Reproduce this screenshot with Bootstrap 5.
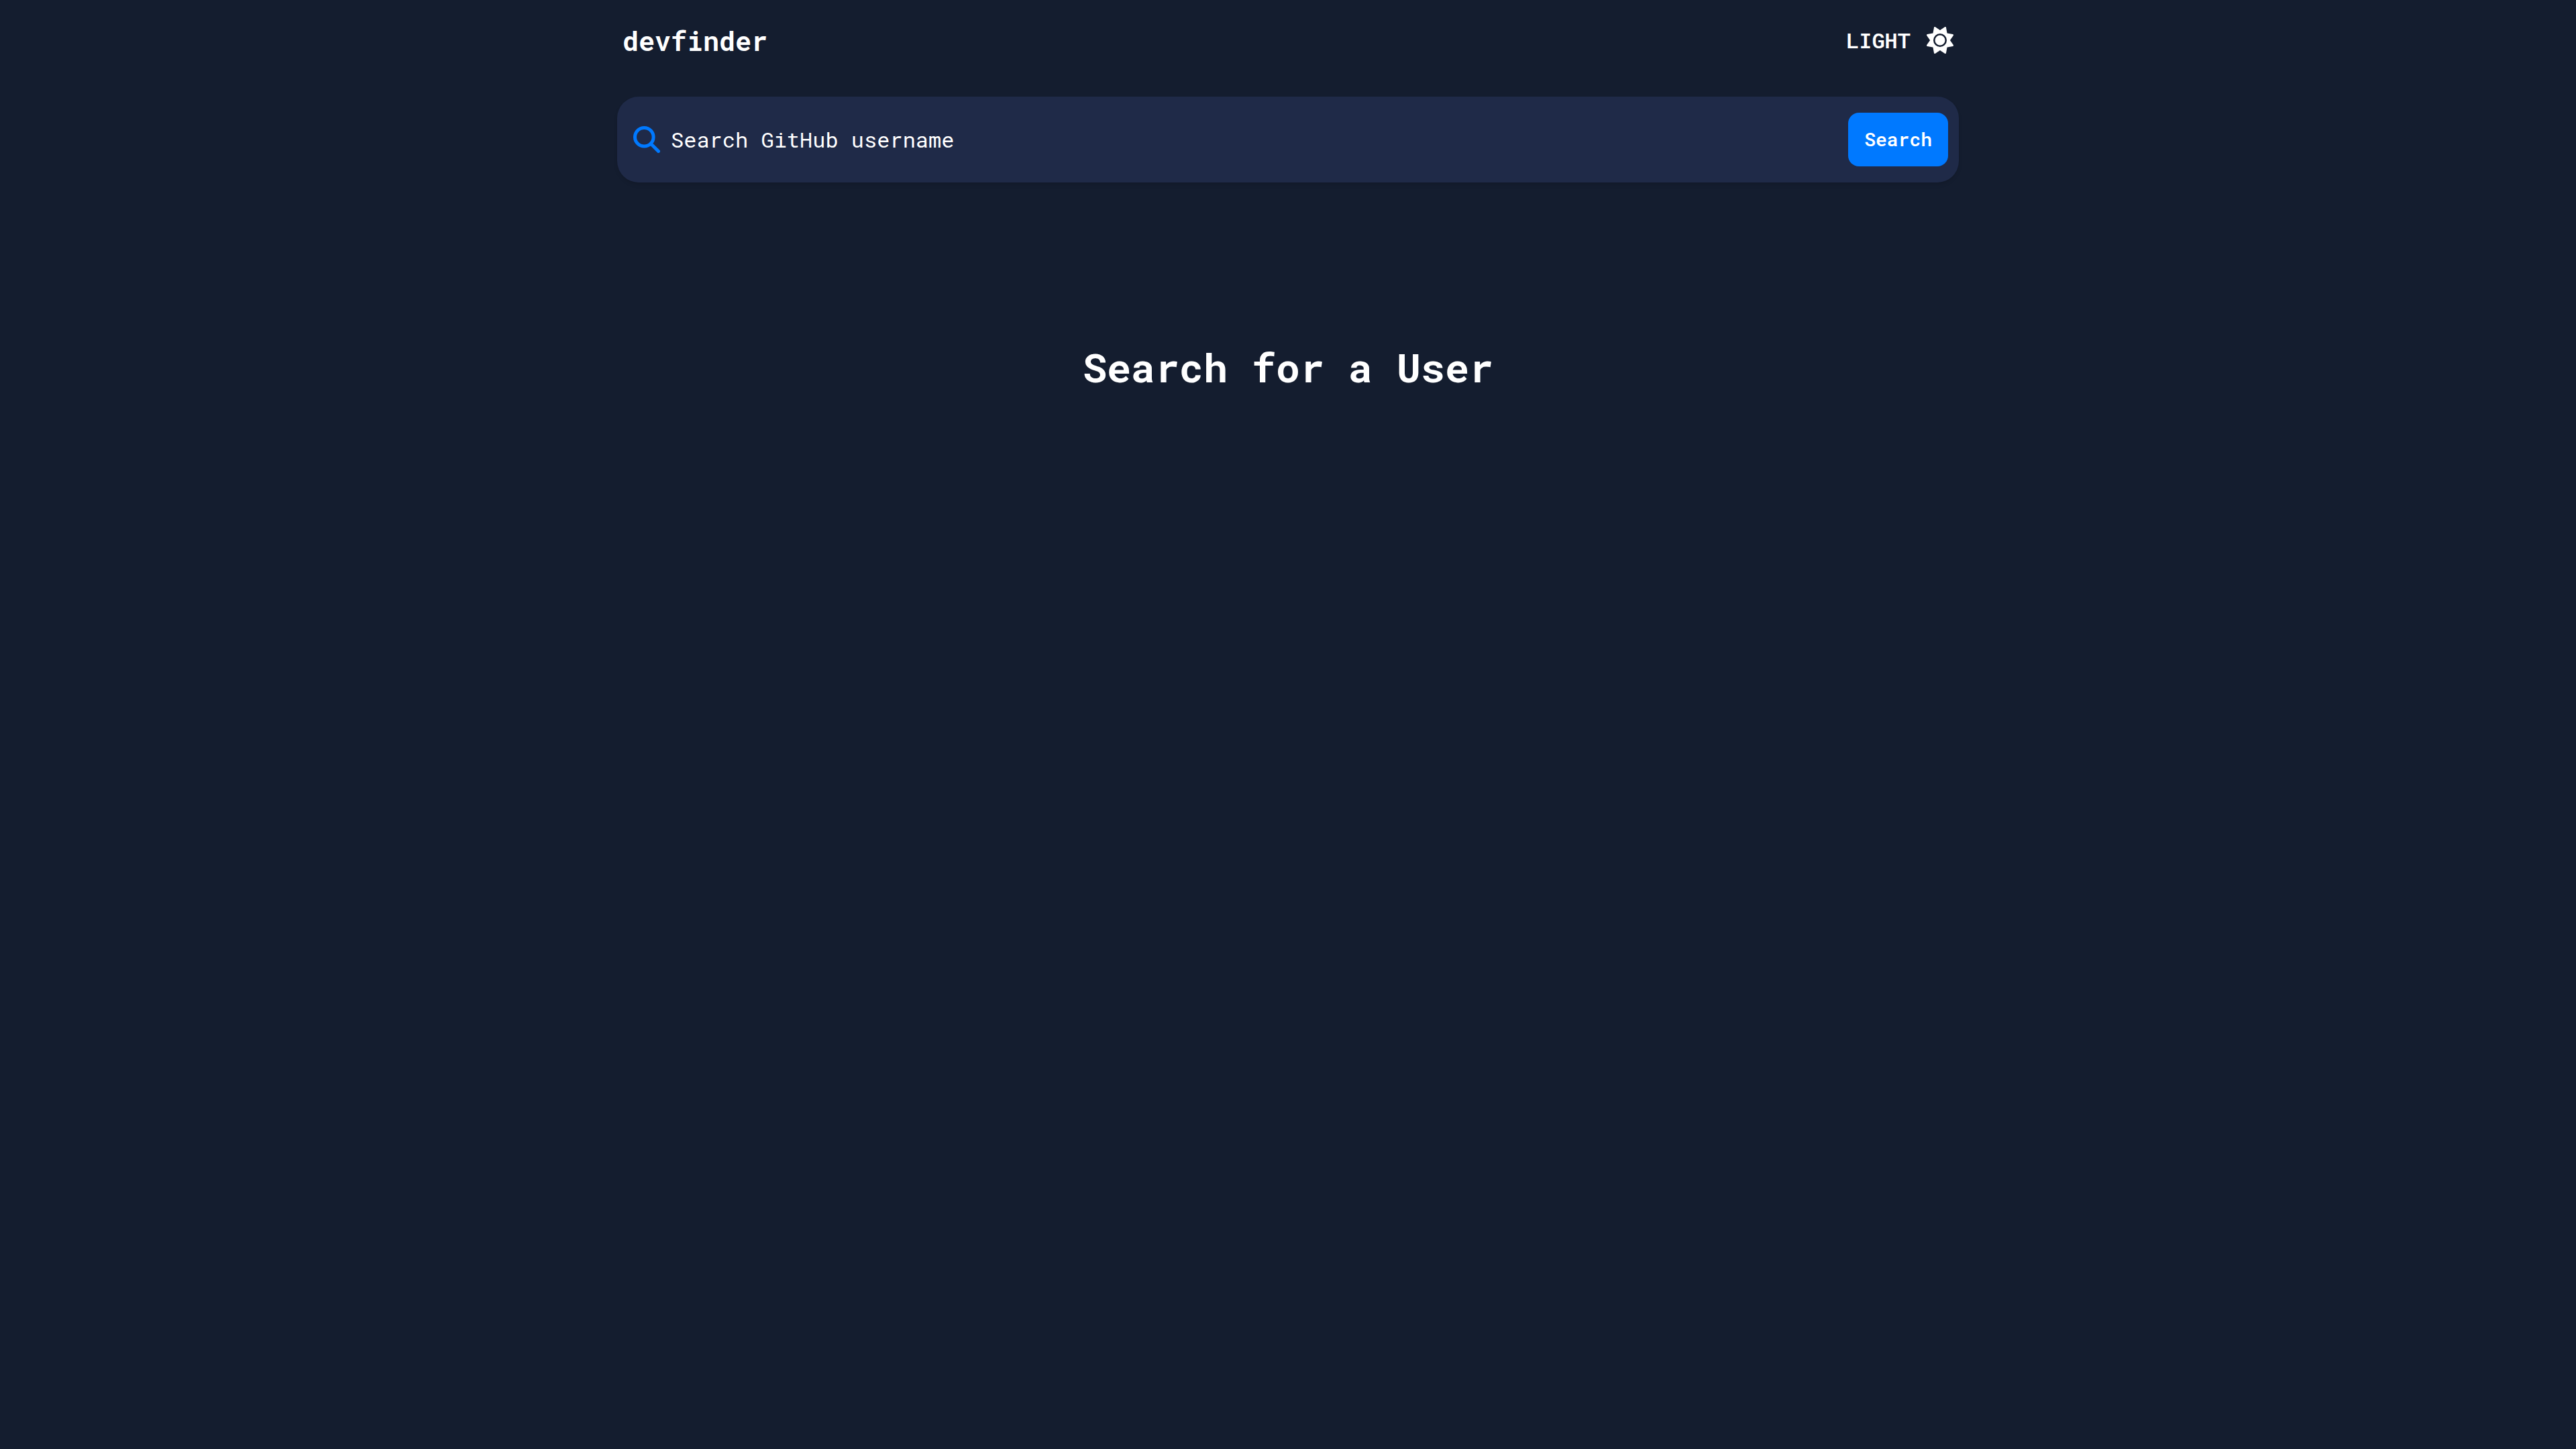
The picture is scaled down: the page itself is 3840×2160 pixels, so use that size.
<!DOCTYPE html>
<html lang="en" data-bs-theme="dark">
<head>
<meta charset="utf-8">
<meta name="viewport" content="width=device-width, initial-scale=1">
<title>devfinder</title>
<link rel="stylesheet" href="https://cdn.jsdelivr.net/npm/bootstrap@5.3.0/dist/css/bootstrap.min.css">
<style>
  body { background: #141d2f; color: #fff; font-family: "Roboto Mono", "Liberation Mono", monospace; }
  .page-wrap { max-width: 2000px; }
  .top-bar { min-height: 120px; padding: 0 8px; }
  .brand { font-size: 40px; line-height: 48px; padding-top: 2px; }
  .theme-toggle { font-size: 32px; line-height: 40px; font-weight: 600; gap: 24px; }
  .search-form { background: #1f2a48; border-radius: 32px; min-height: 128px; padding: 0 16px 0 24px; margin-top: 24px; gap: 16px; box-shadow: 0 4px 6px -1px rgba(0, 0, 0, .12); }
  .search-form .form-control { font-size: 32px; line-height: 48px; color: #fff; }
  .search-form .form-control::placeholder { color: #fff; opacity: 1; }
  .search-btn { --bs-btn-bg: #0079ff; --bs-btn-border-color: #0079ff; font-size: 28px; line-height: 40px; height: 80px; padding: 0 24px; border-width: 0; border-radius: 16px; font-weight: 600; }
  .icon-box { width: 40px; height: 40px; }
  .empty-title { font-size: 60px; line-height: 70px; margin-top: 240px; }
</style>
<script src="https://cdn.jsdelivr.net/npm/bootstrap@5.3.0/dist/js/bootstrap.bundle.min.js"></script>
</head>
<body>
<div class="page-wrap mx-auto">
  <header class="top-bar d-flex align-items-center justify-content-between">
    <a href="#" class="brand fw-bold text-white text-decoration-none">devfinder</a>
    <button type="button" class="theme-toggle btn d-flex align-items-center p-0 border-0 text-white">
      LIGHT
      <svg class="icon-box" viewBox="0 0 512 512" fill="currentColor" aria-hidden="true"><path d="M361.5 1.2c5 2.1 8.6 6.6 9.6 11.9L391 121l107.9 19.8c5.3 1 9.8 4.6 11.9 9.6s1.5 10.7-1.6 15.2L446.9 256l62.3 90.3c3.1 4.5 3.7 10.2 1.6 15.2s-6.6 8.6-11.9 9.6L391 391 371.1 498.9c-1 5.3-4.6 9.8-9.6 11.9s-10.7 1.5-15.2-1.6L256 446.9l-90.3 62.3c-4.5 3.1-10.2 3.7-15.2 1.6s-8.6-6.6-9.6-11.9L121 391 13.1 371.1c-5.3-1-9.8-4.6-11.9-9.6s-1.5-10.7 1.6-15.2L65.1 256 2.8 165.7c-3.1-4.5-3.7-10.2-1.6-15.2s6.6-8.6 11.9-9.6L121 121 140.9 13.1c1-5.3 4.6-9.8 9.6-11.9s10.7-1.5 15.2 1.6L256 65.1 346.3 2.8c4.5-3.1 10.2-3.7 15.2-1.6zM160 256a96 96 0 1 1 192 0 96 96 0 1 1-192 0zm224 0a128 128 0 1 0-256 0 128 128 0 1 0 256 0z"/></svg>
    </button>
  </header>
  <main>
    <form class="search-form d-flex align-items-center" role="search">
      <label for="username" class="d-flex flex-shrink-0">
        <svg class="icon-box" viewBox="0 0 40 40" fill="none" stroke="#0079ff" stroke-width="5" stroke-linecap="round" role="img" aria-label="GitHub username"><circle cx="16.3" cy="16.3" r="13.8"/><path d="M26.2 26.2 37.5 37.5"/></svg>
      </label>
      <input id="username" type="text" class="form-control border-0 bg-transparent shadow-none p-0" placeholder="Search GitHub username">
      <button type="button" class="search-btn btn btn-primary">Search</button>
    </form>
    <h1 class="empty-title fw-bold text-center mb-0">Search for a User</h1>
  </main>
</div>
</body>
</html>
